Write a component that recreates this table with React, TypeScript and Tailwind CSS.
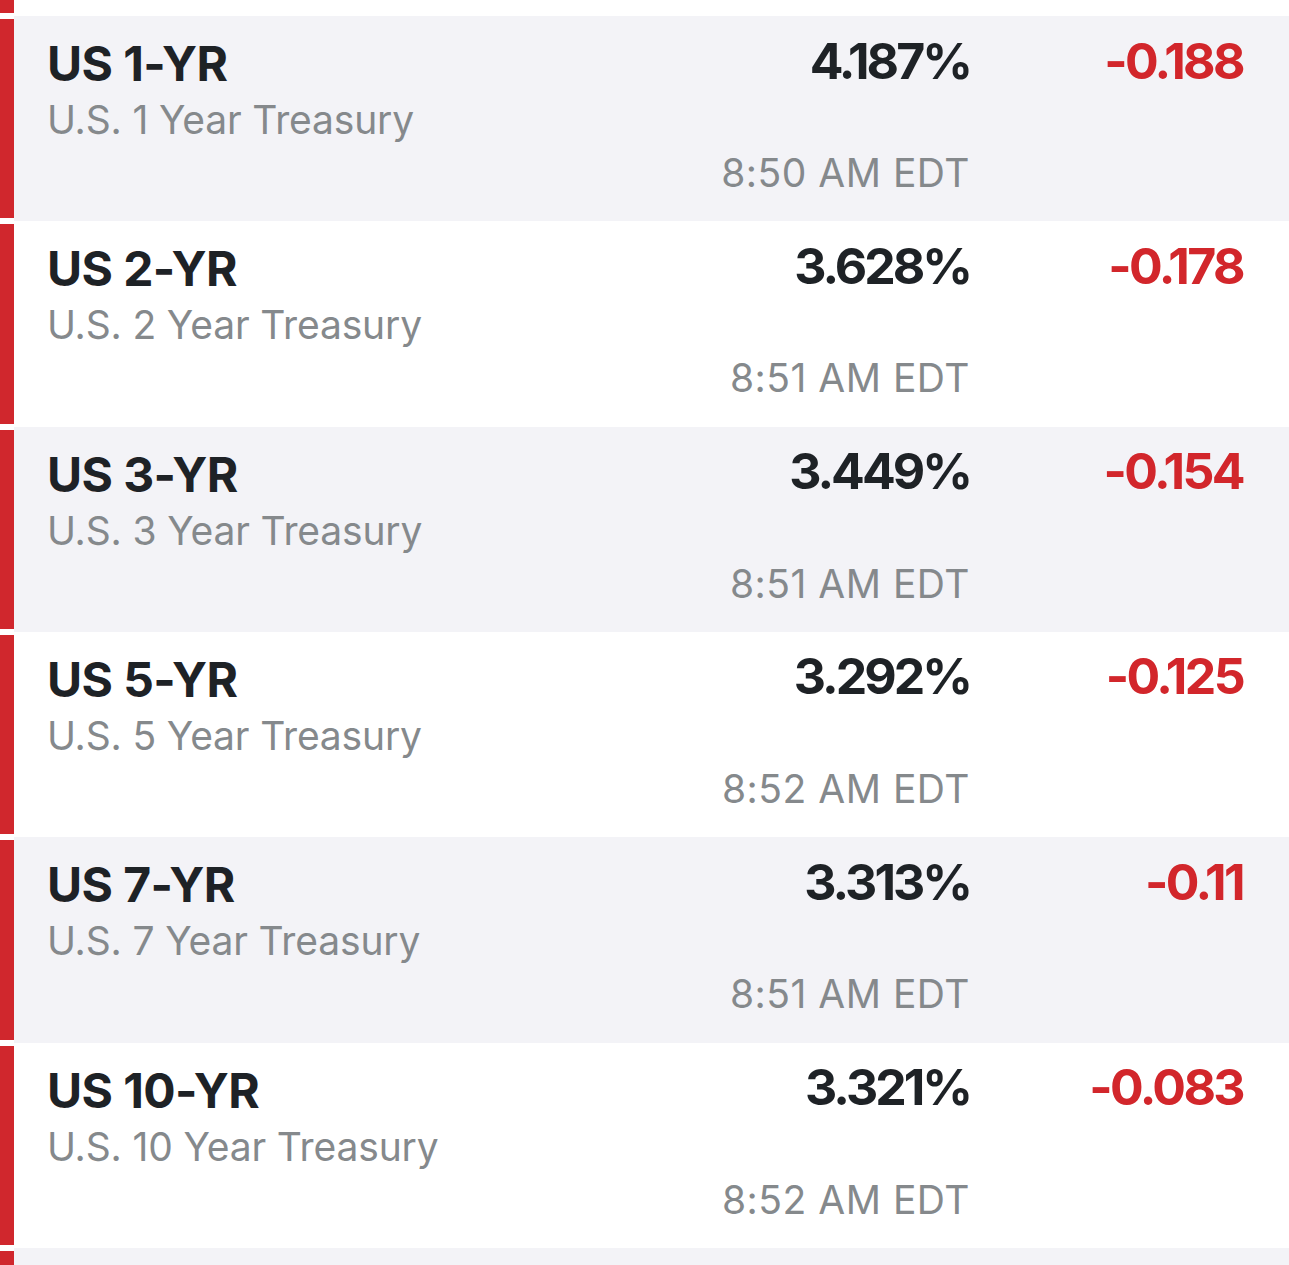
import React from 'react'

interface Quote {
  symbol: string
  name: string
  last: string
  change: string
  time: string
}

const quotes: Quote[] = [
  { symbol: 'US 1-YR', name: 'U.S. 1 Year Treasury', last: '4.187%', change: '-0.188', time: '8:50 AM EDT' },
  { symbol: 'US 2-YR', name: 'U.S. 2 Year Treasury', last: '3.628%', change: '-0.178', time: '8:51 AM EDT' },
  { symbol: 'US 3-YR', name: 'U.S. 3 Year Treasury', last: '3.449%', change: '-0.154', time: '8:51 AM EDT' },
  { symbol: 'US 5-YR', name: 'U.S. 5 Year Treasury', last: '3.292%', change: '-0.125', time: '8:52 AM EDT' },
  { symbol: 'US 7-YR', name: 'U.S. 7 Year Treasury', last: '3.313%', change: '-0.11', time: '8:51 AM EDT' },
  { symbol: 'US 10-YR', name: 'U.S. 10 Year Treasury', last: '3.321%', change: '-0.083', time: '8:52 AM EDT' },
]

function QuoteRow({ quote, shaded }: { quote: Quote; shaded: boolean }) {
  return (
    <div className="flex h-[205.33px] bg-white">
      {/* red marker, inset 3px top & bottom */}
      <div className="w-[14px] py-[3px]">
        <div className="h-full bg-[#d0272d]" />
      </div>
      <div className={`flex flex-1 ${shaded ? 'bg-[#f3f3f7]' : 'bg-white'}`}>
        <div className="flex-1 pl-[33px] pt-[24px]">
          <div className="text-[48px] leading-[48px] font-bold text-[#1e2226] tracking-[-0.6px]">{quote.symbol}</div>
          <div className="mt-[12px] text-[39px] leading-[39px] text-[#85898c] tracking-[-0.15px]">{quote.name}</div>
        </div>
        <div className="flex flex-col items-end pt-[19.5px] pr-[1px]">
          <div className="text-[50px] leading-[50px] font-bold text-[#1e2226] tracking-[-3px]">{quote.last}</div>
          <div className="mt-[67.5px] text-[39px] leading-[39px] text-[#85898c] tracking-[0.5px]">{quote.time}</div>
        </div>
        <div className="w-[318px] pr-[46px] pt-[19.5px] text-right">
          <div className="text-[50px] leading-[50px] font-bold text-[#d2262b] tracking-[-2.6px]">{quote.change}</div>
        </div>
      </div>
    </div>
  )
}

export default function App() {
  return (
    <div className="h-[1265px] overflow-hidden bg-white font-['Inter',sans-serif]">
      {/* tail of the previous row */}
      <div className="flex h-[16px]">
        <div className="w-[14px] h-[13px] bg-[#d0272d]" />
      </div>
      {quotes.map((q, i) => (
        <QuoteRow key={q.symbol} quote={q} shaded={i % 2 === 0} />
      ))}
      {/* head of the next row */}
      <div className="flex h-[40px]">
        <div className="w-[14px] pt-[3px]">
          <div className="h-full bg-[#d0272d]" />
        </div>
        <div className="flex-1 bg-[#f3f3f7]" />
      </div>
    </div>
  )
}
